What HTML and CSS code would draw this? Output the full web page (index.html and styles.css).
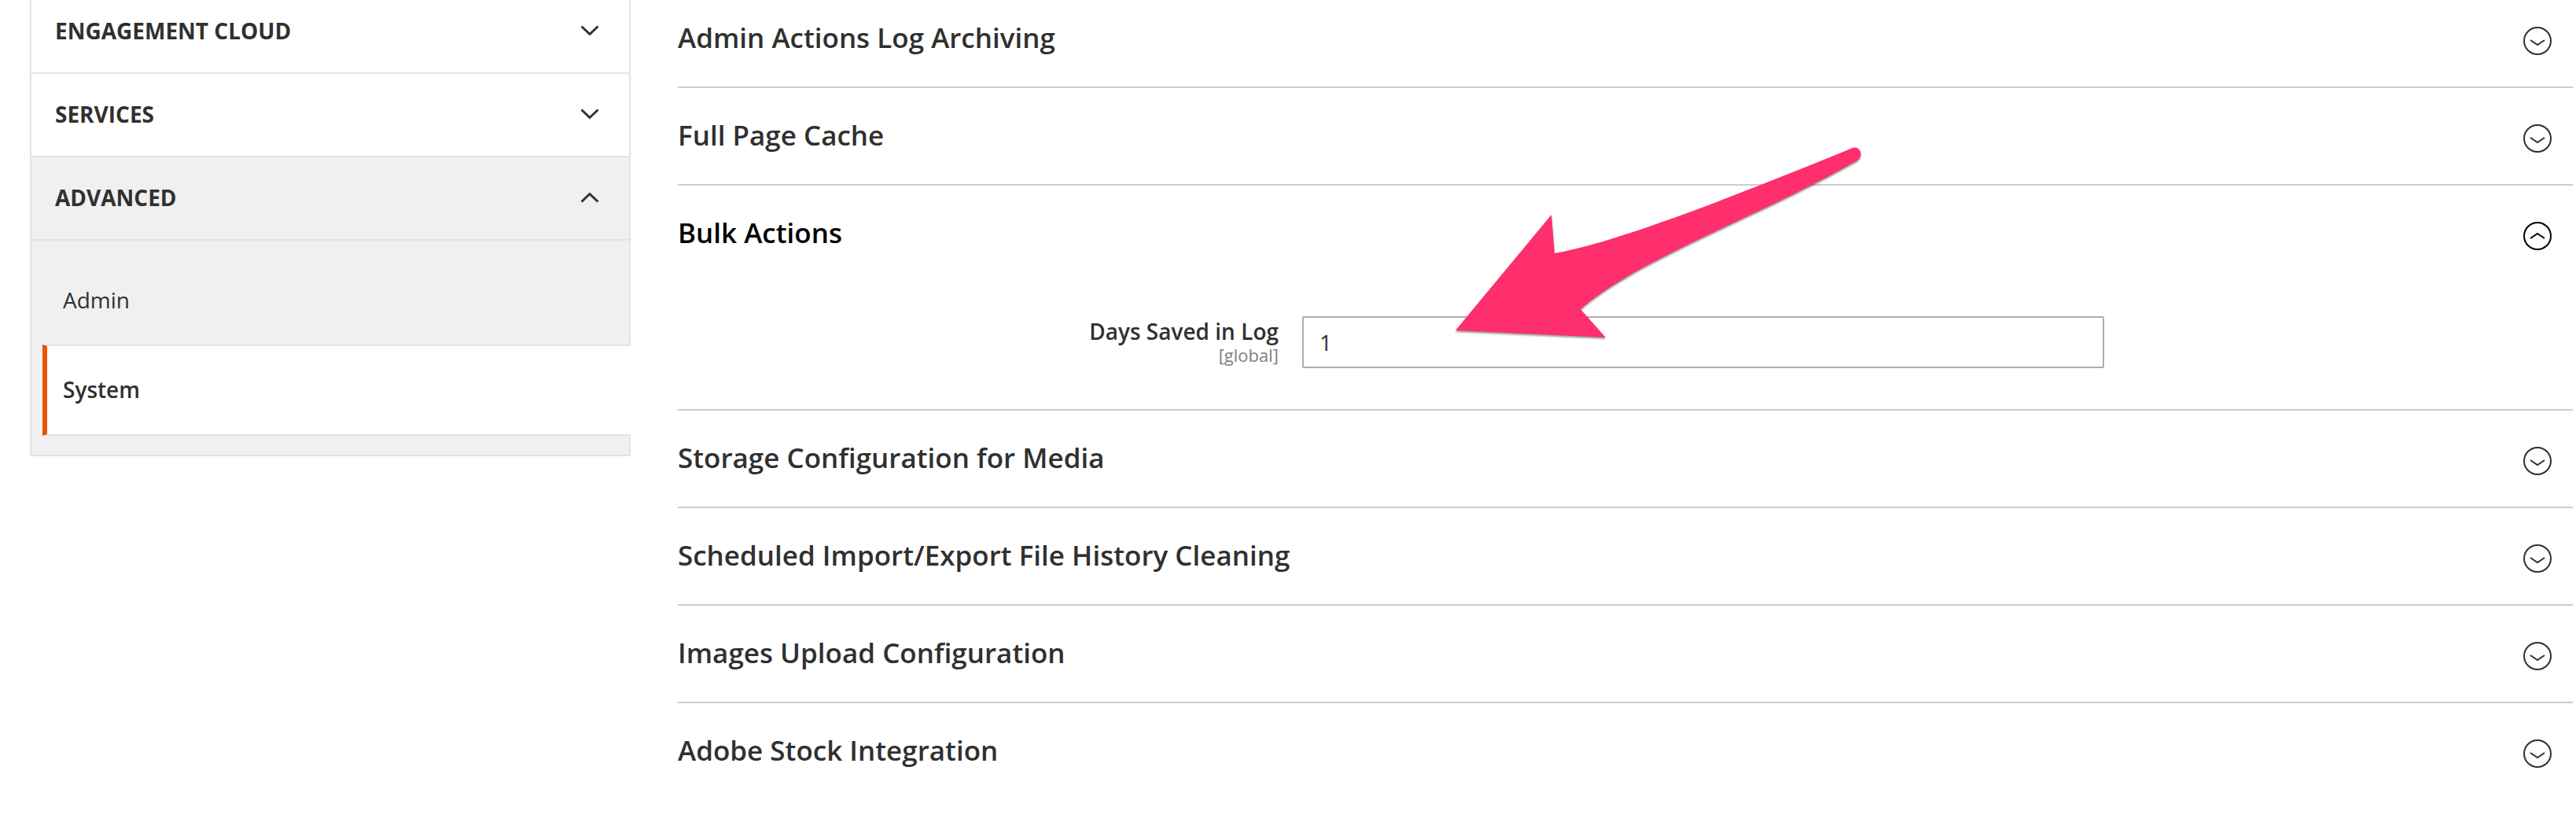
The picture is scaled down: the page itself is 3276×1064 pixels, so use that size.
FILE: index.html
```html
<!DOCTYPE html>
<html lang="en">
<head>
<meta charset="utf-8">
<meta name="viewport" content="width=device-width, initial-scale=1">
<title>Configuration</title>
<link rel="stylesheet" href="styles.css">
</head>
<body>
<svg class="sprite" aria-hidden="true">
  <symbol id="chevron" viewBox="0 0 24 14"><path d="M1.500 1.500 12 11.500 22.500 1.500" fill="none" stroke="currentColor" stroke-width="3"/></symbol>
  <symbol id="circle-down" viewBox="0 0 36 36"><circle cx="18" cy="18" r="17" fill="none" stroke="currentColor" stroke-width="2"/><path d="M9 17 18 23 27 17" fill="none" stroke="currentColor" stroke-width="2"/></symbol>
  <symbol id="circle-up" viewBox="0 0 36 36"><circle cx="18" cy="18" r="17" fill="none" stroke="currentColor" stroke-width="2"/><path d="M9 21 18 15 27 21" fill="none" stroke="currentColor" stroke-width="2"/></symbol>
</svg>
<div class="page">
  <nav class="tabs" aria-label="Configuration">
    <button class="tab" type="button">ENGAGEMENT CLOUD<svg class="tab-icon"><use href="#chevron"/></svg></button>
    <button class="tab" type="button">SERVICES<svg class="tab-icon"><use href="#chevron"/></svg></button>
    <button class="tab tab-open" type="button" aria-expanded="true">ADVANCED<svg class="tab-icon tab-icon-up"><use href="#chevron"/></svg></button>
    <ul class="items">
      <li><a class="item" href="#admin">Admin</a></li>
      <li><a class="item item-current" href="#system" aria-current="page">System</a></li>
    </ul>
  </nav>
  <main class="sections">
    <section class="section">
      <h2 class="heading"><button class="toggle" type="button">Admin Actions Log Archiving<svg class="toggle-icon"><use href="#circle-down"/></svg></button></h2>
    </section>
    <section class="section">
      <h2 class="heading"><button class="toggle" type="button">Full Page Cache<svg class="toggle-icon"><use href="#circle-down"/></svg></button></h2>
    </section>
    <section class="section">
      <h2 class="heading"><button class="toggle toggle-open" type="button" aria-expanded="true">Bulk Actions<svg class="toggle-icon"><use href="#circle-up"/></svg></button></h2>
      <div class="field">
        <label class="label" for="days">Days Saved in Log<span class="scope">[global]</span></label>
        <div class="control">
          <input class="input" id="days" type="text" value="1">
          <svg class="arrow" viewBox="1845 180 530 260" aria-hidden="true"><path d="M1851 420 1973 273 1977 322C2050 310 2200 252 2356 188C2365 185 2371 197 2362 204C2232 278 2085 328 2010 393L2042 429Z" fill="#ff2e6d"/></svg>
        </div>
      </div>
    </section>
    <section class="section">
      <h2 class="heading"><button class="toggle" type="button">Storage Configuration for Media<svg class="toggle-icon"><use href="#circle-down"/></svg></button></h2>
    </section>
    <section class="section">
      <h2 class="heading"><button class="toggle" type="button">Scheduled Import/Export File History Cleaning<svg class="toggle-icon"><use href="#circle-down"/></svg></button></h2>
    </section>
    <section class="section">
      <h2 class="heading"><button class="toggle" type="button">Images Upload Configuration<svg class="toggle-icon"><use href="#circle-down"/></svg></button></h2>
    </section>
    <section class="section">
      <h2 class="heading"><button class="toggle" type="button">Adobe Stock Integration<svg class="toggle-icon"><use href="#circle-down"/></svg></button></h2>
    </section>
  </main>
</div>
</body>
</html>
```
FILE: styles.css
```css
* {
  box-sizing: border-box;
}

body {
  margin: 0;
  background: #fff;
  color: #303030;
  font: 28px/40px "Open Sans", "Noto Sans", sans-serif;
}

button {
  margin: 0;
  border: 0;
  background: none;
  color: inherit;
  font: inherit;
  text-align: left;
  cursor: pointer;
}

.sprite {
  display: none;
}

.page {
  display: grid;
  grid-template-columns: 382fr 1205fr;
  column-gap: 60px;
  align-items: start;
  margin-top: -12px;
  padding: 0 4px 0 38px;
}

/* Sidebar */

.tabs {
  border: solid #e3e3e3;
  border-width: 0 2px 2px;
}

.tab {
  display: flex;
  align-items: center;
  justify-content: space-between;
  width: 100%;
  padding: 31px 38px 33px 30px;
  border-bottom: 2px solid #e3e3e3;
  font-weight: 700;
}

.tab-open,
.items {
  background: #f0f0f0;
}

.tab-icon {
  width: 24px;
  height: 14px;
}

.tab-icon-up {
  transform: rotate(180deg);
}

.items {
  margin: 0;
  padding: 20px 0 24px 14px;
  list-style: none;
}

.item {
  display: block;
  padding: 35px 6px 37px 26px;
  color: inherit;
  text-decoration: none;
}

.item-current {
  margin-right: -2px;
  padding-left: 20px;
  border: solid #e3e3e3;
  border-width: 2px 0;
  border-left: 6px solid #eb5202;
  background: #fff;
  font-weight: 600;
}

/* Configuration sections */

.section {
  border-bottom: 2px solid #ccc;
}

.section:last-child {
  border-bottom: 0;
}

.heading {
  margin: 0;
  font-size: 35px;
  line-height: 48px;
  font-weight: 600;
}

.toggle {
  display: flex;
  justify-content: space-between;
  width: 100%;
  padding: 36px 27px 38px 0;
}

.toggle-open {
  color: #000;
}

.toggle-icon {
  width: 36px;
  height: 36px;
  margin-top: 10px;
}

.field {
  display: grid;
  grid-template-columns: 382fr 510fr 283fr;
  column-gap: 30px;
  padding: 44px 0 52px;
}

.label {
  display: grid;
  align-content: start;
  padding-top: 4px;
  font-weight: 600;
  line-height: 30px;
  text-align: right;
}

.scope {
  color: #808080;
  font-size: 22px;
  font-weight: 400;
}

.control {
  position: relative;
}

.input {
  display: block;
  width: 100%;
  height: 66px;
  padding: 0 20px;
  border: 2px solid #adadad;
  border-radius: 2px;
  background: #fff;
  color: inherit;
  font: inherit;
}

/* Callout drawn over the field */
.arrow {
  position: absolute;
  top: -222px;
  left: 189px;
  width: 530px;
  height: 260px;
  pointer-events: none;
  filter: drop-shadow(0 2px 1px rgb(0 0 0 / 40%));
}
```
